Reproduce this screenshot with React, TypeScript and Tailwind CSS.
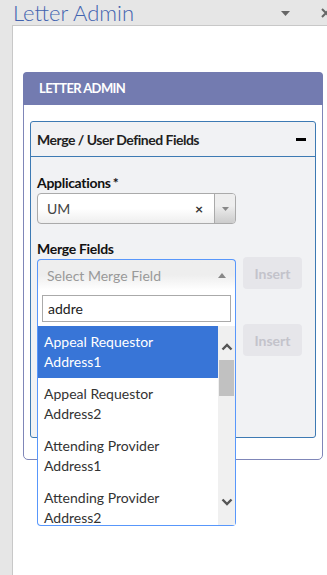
import React from "react";

const Chevron = ({ up }: { up?: boolean }) => (
  <svg width="12" height="8" viewBox="0 0 12 8" className="block">
    <path
      d={up ? "M1.5 6.5 L6 2 L10.5 6.5" : "M1.5 1.5 L6 6 L10.5 1.5"}
      fill="none"
      stroke="#555"
      strokeWidth="2.4"
    />
  </svg>
);

export default function App() {
  const options = [
    ["Appeal Requestor", "Address1"],
    ["Appeal Requestor", "Address2"],
    ["Attending Provider", "Address1"],
    ["Attending Provider", "Address2"],
  ];
  return (
    <div
      className="relative w-[327px] h-[575px] overflow-hidden bg-[#e6e6e6]"
      style={{ fontFamily: "Lato, 'Noto Sans', sans-serif" }}
    >
      {/* title bar */}
      <div className="flex h-[25px] items-start">
        <div className="pl-[13px] text-[22px] leading-[26px] font-light text-[#4263b0]">
          Letter Admin
        </div>
        <div className="ml-auto flex items-center gap-[31px] mt-[8px] mr-[-4px]">
          <svg width="9" height="5" viewBox="0 0 9 5">
            <path d="M0 0 L9 0 L4.5 5 Z" fill="#666" />
          </svg>
          <svg width="10" height="10" viewBox="0 0 10 10">
            <path d="M1 1 L9 9 M9 1 L1 9" stroke="#666" strokeWidth="2" />
          </svg>
        </div>
      </div>

      {/* white panel */}
      <div className="ml-[12px] h-[550px] border-l border-t border-[#c8c8c8] bg-white pl-[10px] pt-[46px]">
        {/* card */}
        <div className="relative w-[300px] rounded-[5px] border border-[#7f86b8] bg-white">
          <div className="flex h-[33px] items-center rounded-t-[4px] bg-[#737bb0] pl-[16px] -mx-[1px] -mt-[1px]">
            <span className="text-[13px] font-bold tracking-[-0.6px] text-white">LETTER ADMIN</span>
          </div>
          <div className="px-[6px] pt-[16px] pb-[21px]">
            {/* section */}
            <div className="w-[286px] rounded-[3px] border border-[#3d7ab3] bg-[#f1f2f4]">
              <div className="flex h-[35px] items-center justify-between border-b border-[#3d7ab3] pl-[6px] pr-[9px]">
                <span className="text-[14px] font-bold tracking-[-0.5px] text-[#1f1f1f]">
                  Merge / User Defined Fields
                </span>
                <span className="block h-[3px] w-[10px] bg-black" />
              </div>
              <div className="relative px-[6px] pt-[16px] h-[280px]">
                <div className="h-[20px] text-[14px] font-bold leading-[20px] tracking-[-0.3px] text-[#111]">
                  Applications<span className="ml-[2px]">*</span>
                </div>
                <div className="flex h-[31px] w-[199px] overflow-hidden rounded-[4px] border border-[#aaaaaa] bg-gradient-to-t from-[#eeeeee] to-white to-50%">
                  <div className="flex flex-1 items-center pl-[9px] text-[14px] text-[#444]">UM</div>
                  <div className="flex items-center pr-[11px] text-[14px] font-bold text-[#333]">×</div>
                  <div className="flex w-[21px] items-center justify-center border-l border-[#aaaaaa] bg-gradient-to-t from-[#cccccc] to-[#eeeeee] to-60%">
                    <svg width="7" height="4" viewBox="0 0 7 4">
                      <path d="M0 0 L7 0 L3.5 4 Z" fill="#888" />
                    </svg>
                  </div>
                </div>

                <div className="mt-[15px] h-[20px] text-[14px] font-bold leading-[20px] tracking-[-0.3px] text-[#111]">
                  Merge Fields
                </div>
                <div className="flex items-start gap-[7px]">
                  <div className="flex h-[31px] w-[199px] items-center rounded-t-[4px] border border-b-0 border-[#5897fb] bg-gradient-to-t from-white to-[#eeeeee] to-50% pl-[9px] pr-[9px]">
                    <span className="flex-1 text-[14px] text-[#999]">Select Merge Field</span>
                    <svg width="8" height="5" viewBox="0 0 8 5">
                      <path d="M0 5 L8 5 L4 0 Z" fill="#888" />
                    </svg>
                  </div>
                  <button className="-mt-[2px] h-[32px] w-[59px] rounded-[4px] bg-[#e6e6ea] text-[14px] font-bold text-[#c3c3cb]">
                    Insert
                  </button>
                </div>
                <div className="mt-[34px] flex">
                  <div className="w-[206px]" />
                  <button className="h-[32px] w-[59px] rounded-[4px] bg-[#e6e6ea] text-[14px] font-bold text-[#c3c3cb]">
                    Insert
                  </button>
                </div>
              </div>
            </div>
          </div>
        </div>
      </div>

      {/* dropdown overlay */}
      <div className="absolute left-[37px] top-[290px] h-[236px] w-[199px] rounded-b-[4px] border border-t-0 border-[#5897fb] bg-white">
        <div className="px-[4px] pt-[5px] pb-[4px]">
          <div className="flex h-[27px] items-center border border-[#aaaaaa] bg-white pl-[5px] text-[14px] text-[#222]">
            addre
          </div>
        </div>
        <div className="flex h-[199px] overflow-hidden">
          <div className="flex-1 overflow-hidden">
            {options.map((o, i) => (
              <div
                key={i}
                className={`px-[6px] py-[6px] text-[14px] leading-[20px] ${
                  i === 0 ? "bg-[#3875d7] text-white" : "text-[#333]"
                }`}
              >
                <div>{o[0]}</div>
                <div>{o[1]}</div>
              </div>
            ))}
          </div>
          <div className="flex w-[17px] flex-col bg-[#f0f0f0]">
            <div className="flex h-[34px] justify-center pt-[17px]">
              <Chevron up />
            </div>
            <div className="mx-[1px] h-[36px] bg-[#c1c1c1]" />
            <div className="flex-1" />
            <div className="flex h-[27px] justify-center">
              <Chevron />
            </div>
          </div>
        </div>
      </div>
    </div>
  );
}
